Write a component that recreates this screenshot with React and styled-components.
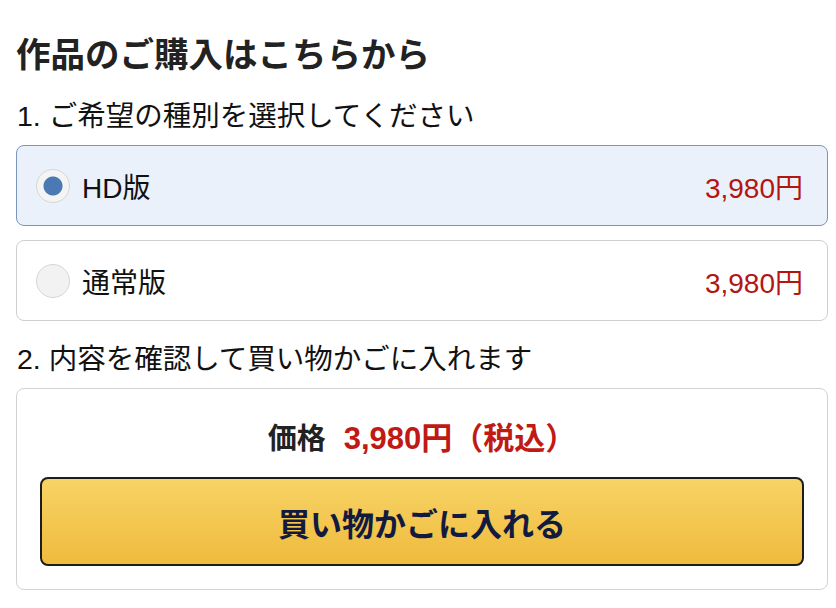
import React, { useState } from 'react';
import styled, { createGlobalStyle } from 'styled-components';

const GlobalStyle = createGlobalStyle`
  body {
    margin: 0;
    background: #ffffff;
    font-family: "Liberation Sans", "Noto Sans CJK JP", sans-serif;
    color: #111111;
  }
`;

const Page = styled.div`
  padding: 32px 8px 0 16px;
  display: flex;
  flex-direction: column;
`;

const Title = styled.h1`
  margin: 0;
  font-size: 34.5px;
  line-height: 46px;
  font-weight: 700;
  color: #222222;
`;

const Step = styled.div`
  font-size: 28.5px;
  line-height: 40px;
  color: #111111;
  margin: ${({ $top }) => $top || '18px'} 0 9px 1px;
`;

const Options = styled.div`
  display: flex;
  flex-direction: column;
  gap: 14px;
`;

const Option = styled.label`
  display: flex;
  align-items: center;
  height: 79px;
  padding: 0 24px 0 19px;
  border-radius: 8px;
  border: 1.5px solid ${({ $active }) => ($active ? '#7a96ba' : '#cfcfcf')};
  background: ${({ $active }) => ($active ? '#eaf1fb' : '#ffffff')};
  cursor: pointer;
`;

const Radio = styled.span`
  width: 34px;
  height: 34px;
  border-radius: 50%;
  box-sizing: border-box;
  border: 1px solid #d6d6d6;
  background: ${({ $checked }) =>
    $checked ? 'radial-gradient(circle, #4a79b3 0 9px, #f4f4f4 10px)' : '#f2f2f2'};
  margin-right: 12px;
  flex-shrink: 0;
`;

const OptionName = styled.span`
  flex: 1;
  font-size: 28px;
  color: #111111;
`;

const Price = styled.span`
  font-size: 28px;
  color: #b31612;
`;

const BuyBox = styled.div`
  border: 1.5px solid #d2d2d2;
  border-radius: 8px;
  padding: 24px 23px 23px 23px;
  display: flex;
  flex-direction: column;
  align-items: stretch;
  gap: 19px;
`;

const PriceLine = styled.div`
  display: flex;
  justify-content: center;
  align-items: baseline;
  gap: 18px;
  font-weight: 700;
`;

const PriceLabel = styled.span`
  font-size: 29px;
  color: #222222;
`;

const PriceValue = styled.span`
  font-size: 31px;
  color: #bf1a14;
`;

const CartButton = styled.button`
  height: 89px;
  border-radius: 8px;
  border: 2px solid #1d1d1d;
  background: linear-gradient(#f7d365, #efbb3d);
  font-family: inherit;
  font-size: 32px;
  font-weight: 700;
  color: #131a3f;
  cursor: pointer;
`;

const options = [
  { id: 'hd', name: 'HD版', price: '3,980円' },
  { id: 'sd', name: '通常版', price: '3,980円' },
];

export default function App() {
  const [selected, setSelected] = useState('hd');
  return (
    <>
      <GlobalStyle />
      <Page>
        <Title>作品のご購入はこちらから</Title>
        <Step>1. ご希望の種別を選択してください</Step>
        <Options>
          {options.map((o) => (
            <Option key={o.id} $active={selected === o.id} onClick={() => setSelected(o.id)}>
              <Radio $checked={selected === o.id} />
              <OptionName>{o.name}</OptionName>
              <Price>{o.price}</Price>
            </Option>
          ))}
        </Options>
        <Step $top="18px">2. 内容を確認して買い物かごに入れます</Step>
        <BuyBox>
          <PriceLine>
            <PriceLabel>価格</PriceLabel>
            <PriceValue>3,980円（税込）</PriceValue>
          </PriceLine>
          <CartButton>買い物かごに入れる</CartButton>
        </BuyBox>
      </Page>
    </>
  );
}
